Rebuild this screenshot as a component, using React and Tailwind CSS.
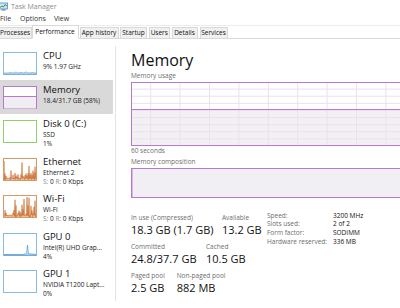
import React from "react";

const BLUE = "#86bbe3";
const PURPLE = "#b978d0";
const GREEN = "#8fd16a";
const ORANGE = "#d69a68";

function spikes(seed) {
  const pts = [];
  let s = seed;
  const rnd = () => {
    s = (s * 9301 + 49297) % 233280;
    return s / 233280;
  };
  pts.push("0,23");
  for (let x = 1; x <= 33; x += 1) {
    const big = rnd() > 0.72;
    const h = big ? 8 + rnd() * 13 : 2 + rnd() * 6;
    pts.push(`${x},${23 - h}`);
    pts.push(`${x + 0.5},${22 - rnd() * 2}`);
  }
  pts.push("34,23");
  return pts.join(" ");
}

function Thumb({ type }) {
  if (type === "cpu") {
    return (
      <svg width="34" height="23" className="block">
        <rect x="0.5" y="0.5" width="33" height="22" fill="#fff" stroke={BLUE} />
        <polyline
          points="1,21 5,21 7,20.5 10,21 13,20 15,21 18,20.3 20,21 23,20 26,21 29,20.5 33,21 33,22 1,22"
          fill="#dceaf6"
          stroke="#5a9fd4"
          strokeWidth="0.6"
        />
      </svg>
    );
  }
  if (type === "mem") {
    return (
      <svg width="34" height="23" className="block">
        <rect x="0.5" y="0.5" width="33" height="22" fill="#fff" stroke={PURPLE} />
        <rect x="1" y="10.5" width="32" height="12" fill="#f1eef3" />
        <line x1="1" y1="10.5" x2="33" y2="10.5" stroke={PURPLE} strokeWidth="1" />
      </svg>
    );
  }
  if (type === "disk") {
    return (
      <svg width="34" height="23" className="block">
        <rect x="0.5" y="0.5" width="33" height="22" fill="#fff" stroke={GREEN} />
      </svg>
    );
  }
  if (type === "eth" || type === "wifi") {
    return (
      <svg width="34" height="23" className="block">
        <rect x="0.5" y="0.5" width="33" height="22" fill="#fff" stroke={ORANGE} />
        <polyline
          points={spikes(type === "eth" ? 17 : 53)}
          fill="#ecbd98"
          stroke="#c8692a"
          strokeWidth="0.6"
        />
        <rect x="0.5" y="0.5" width="33" height="22" fill="none" stroke={ORANGE} />
      </svg>
    );
  }
  if (type === "gpu0") {
    return (
      <svg width="34" height="23" className="block">
        <rect x="0.5" y="0.5" width="33" height="22" fill="#fff" stroke={BLUE} />
        <polyline
          points="1,21.5 20,21.5 22,21 23.5,20.5 24.5,12 25.5,21 27,20.8 33,21.5 33,22 1,22"
          fill="#dceaf6"
          stroke="#3f8fcf"
          strokeWidth="0.6"
        />
      </svg>
    );
  }
  return (
    <svg width="34" height="23" className="block">
      <rect x="0.5" y="0.5" width="33" height="22" fill="#fff" stroke={BLUE} />
    </svg>
  );
}

const items = [
  { name: "CPU", lines: ["9%  1.97 GHz"], h: "h-[34px]", type: "cpu" },
  { name: "Memory", lines: ["18.4/31.7 GB (58%)"], h: "h-[34px]", type: "mem", sel: true },
  { name: "Disk 0 (C:)", lines: ["SSD", "1%"], h: "h-[38px]", type: "disk" },
  { name: "Ethernet", lines: ["Ethernet 2", "SR"], h: "h-[37px]", type: "eth" },
  { name: "Wi-Fi", lines: ["Wi-Fi", "SR"], h: "h-[38px]", type: "wifi" },
  { name: "GPU 0", lines: ["Intel(R) UHD Grap...", "4%"], h: "h-[37px]", type: "gpu0" },
  { name: "GPU 1", lines: ["NVIDIA T1200 Lapt...", "0%"], h: "h-[37px]", type: "gpu1" },
];

function SubLine({ text }) {
  if (text === "SR") {
    return (
      <div className="text-[6.5px] leading-[9px] text-[#1a1a1a] whitespace-nowrap">
        <span className="text-[#8a8a8a]">S:</span> 0 <span className="text-[#8a8a8a]">R:</span> 0 Kbps
      </div>
    );
  }
  return <div className="text-[6.5px] leading-[9px] text-[#1a1a1a] whitespace-nowrap">{text}</div>;
}

function Sidebar() {
  return (
    <div className="w-[116px] shrink-0 pt-[7px]">
      <div className="border-r border-[#e3e3e3] pr-[2px]">
        {items.map((it) => (
          <div
            key={it.name}
            className={`flex ${it.h} pl-[3px] pt-[6px] ${it.sel ? "bg-[#d9d9d9]" : ""}`}
          >
            <Thumb type={it.type} />
            <div className="ml-[6px] -mt-[2.5px]">
              <div className="text-[9.5px] leading-[12px] text-[#111] whitespace-nowrap">{it.name}</div>
              {it.lines.map((l, i) => (
                <SubLine key={i} text={l} />
              ))}
            </div>
          </div>
        ))}
      </div>
    </div>
  );
}

function UsageGraph() {
  const W = 290;
  const H = 64;
  const vlines = [];
  for (let x = 19.7; x < W; x += 29.4) vlines.push(x);
  const hlines = [];
  for (let i = 1; i < 9; i++) hlines.push((H / 9) * i);
  return (
    <svg width={W} height={H} className="block">
      <rect x="0" y="0" width={W} height={H} fill="#fff" />
      <rect x="1" y="27.5" width={W} height={H - 28} fill="#f2f0f3" />
      {vlines.map((x) => (
        <line key={x} x1={x} y1="0" x2={x} y2={H} stroke="#ecdff0" strokeWidth="1" />
      ))}
      {hlines.map((y) => (
        <line key={y} x1="0" y1={y} x2={W} y2={y} stroke="#ecdff0" strokeWidth="1" />
      ))}
      <line x1="0" y1="27.5" x2={W} y2="27.5" stroke={PURPLE} strokeWidth="1.2" />
      <rect x="0.5" y="0.5" width={W + 10} height={H - 1} fill="none" stroke={PURPLE} strokeWidth="1" />
    </svg>
  );
}

function Stat({ label, value, w }) {
  return (
    <div className={`${w} shrink-0`}>
      <div className="text-[6.5px] leading-[9px] text-[#6d6d6d] whitespace-nowrap">{label}</div>
      <div className="mt-[1px] text-[11px] leading-[14px] text-[#111] whitespace-nowrap">{value}</div>
    </div>
  );
}

function Main() {
  return (
    <div className="flex-1 pl-[15px] pt-[11px] overflow-hidden">
      <div className="text-[16px] leading-[20px] text-[#111] whitespace-nowrap">Memory</div>
      <div className="mt-[2px] text-[6.5px] leading-[8px] text-[#6d6d6d]">Memory usage</div>
      <div className="mt-[1.5px]">
        <UsageGraph />
      </div>
      <div className="mt-[1px] text-[6.5px] leading-[8px] text-[#6d6d6d]">60 seconds</div>
      <div className="mt-[3.5px] text-[6.5px] leading-[8px] text-[#6d6d6d]">Memory composition</div>
      <div className="mt-[1.5px] h-[30px] w-[300px] border border-[#b978d0] bg-[#f1eff3] shadow-[inset_1px_0_0_#d9b8e6]" />
      <div className="mt-[15.5px] flex">
        <div className="w-[136px] shrink-0 flex flex-col gap-[5px]">
          <div className="flex">
            <Stat label="In use (Compressed)" value="18.3 GB (1.7 GB)" w="w-[91px]" />
            <Stat label="Available" value="13.2 GB" w="w-[45px]" />
          </div>
          <div className="flex">
            <Stat label="Committed" value="24.8/37.7 GB" w="w-[75px]" />
            <Stat label="Cached" value="10.5 GB" w="w-[50px]" />
          </div>
          <div className="flex">
            <Stat label="Paged pool" value="2.5 GB" w="w-[45.7px]" />
            <Stat label="Non-paged pool" value="882 MB" w="w-[60px]" />
          </div>
        </div>
        <div className="-mt-[1.5px] text-[6.5px] leading-[8.7px]">
          {[
            ["Speed:", "3200 MHz"],
            ["Slots used:", "2 of 2"],
            ["Form factor:", "SODIMM"],
            ["Hardware reserved:", "336 MB"],
          ].map(([a, b]) => (
            <div key={a} className="flex whitespace-nowrap">
              <div className="w-[66px] text-[#6d6d6d]">{a}</div>
              <div className="text-[#111]">{b}</div>
            </div>
          ))}
        </div>
      </div>
    </div>
  );
}

const tabs = [
  { t: "Processes", w: "w-[31.5px] justify-start border-l-0" },
  { t: "Performance", w: "w-[47px] justify-center", sel: true },
  { t: "App history", w: "w-[39px] ml-[1px] justify-center" },
  { t: "Startup", w: "w-[27px] ml-[1.5px] justify-center" },
  { t: "Users", w: "w-[21.5px] ml-[1.5px] justify-center" },
  { t: "Details", w: "w-[26px] ml-[1.5px] justify-center" },
  { t: "Services", w: "w-[28px] ml-[2px] justify-center" },
];

export default function App() {
  return (
    <div className="w-[400px] h-[308px] overflow-hidden bg-white font-['Open_Sans','Noto_Sans',sans-serif] flex flex-col">
      <div className="h-[12px] flex items-center shrink-0">
        <svg width="9" height="9" className="-ml-[1px]">
          <rect x="0.5" y="1" width="8" height="6" fill="#cfe6f6" stroke="#3c8fd0" strokeWidth="0.8" />
          <polyline points="1,5.5 3,4 4.5,5 6,2.5 8,4" fill="none" stroke="#2a7a2a" strokeWidth="0.8" />
          <rect x="2.5" y="7.5" width="4" height="1" fill="#6b6b6b" />
        </svg>
        <span className="ml-[3px] text-[7px] text-[#8a8a8a] leading-none">Task Manager</span>
      </div>
      <div className="h-[13px] flex items-center shrink-0 text-[7px] text-[#333] leading-none">
        <span>File</span>
        <span className="ml-[9px]">Options</span>
        <span className="ml-[8px]">View</span>
      </div>
      <div className="h-[14px] shrink-0 flex items-end border-t border-[#ececec] border-b border-b-[#d9d9d9]">
        {tabs.map((tb) => (
          <div
            key={tb.t}
            className={`${tb.w} shrink-0 flex items-center text-[6.5px] leading-none text-[#111] whitespace-nowrap border border-[#d9d9d9] ${
              tb.sel ? "h-[14px] bg-white border-b-white -mb-[1px] z-10" : "h-[11.5px] bg-[#f0f0f0] border-b-0"
            }`}
          >
            {tb.t}
          </div>
        ))}
      </div>
      <div className="flex flex-1 min-h-0">
        <Sidebar />
        <Main />
      </div>
    </div>
  );
}
